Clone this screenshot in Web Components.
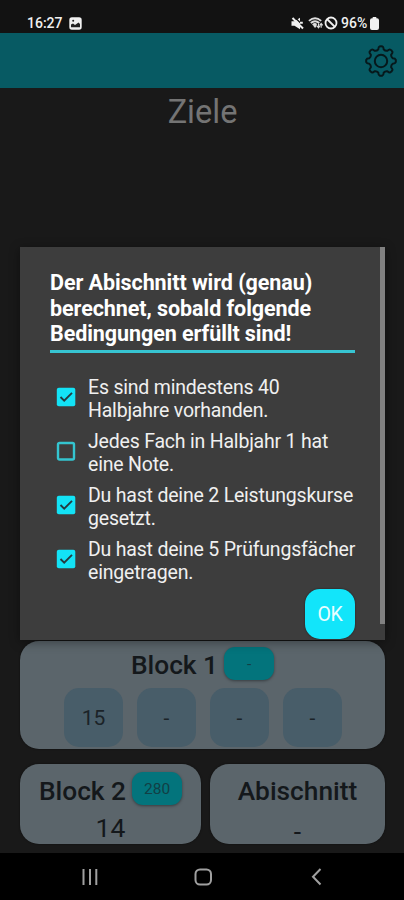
<!DOCTYPE html>
<html lang="de"><head><meta charset="utf-8"><title>Ziele</title>
<style>html,body{margin:0;height:900px;overflow:hidden;background:#191919}body{font-family:Roboto,"Liberation Sans",sans-serif}</style>
</head><body><goal-app></goal-app>
<script>
const define=(name,html)=>{
  const t=document.createElement('template');t.innerHTML=html;
  customElements.define(name,class extends HTMLElement{
    constructor(){super();this.attachShadow({mode:'open'}).append(t.content.cloneNode(true));}
  });
};

define('status-bar',`<style>
:host{display:flex;box-sizing:border-box;height:33px;background:#121212;color:#f0f0f0;padding:13px 25px 0 27px;align-items:flex-start;font-size:14px;line-height:20px;font-weight:500}
svg{display:block;flex:none}.time{width:36px;white-space:nowrap}.sp{flex:1}.pct{margin-left:3px;width:29px;white-space:nowrap;letter-spacing:0}
</style><span class="time">16:27</span>
<svg style="margin:4px 0 0 6px" width="13" height="13" viewBox="0 0 13 13"><rect x=".3" y=".3" width="12.4" height="12.4" rx="2.6" fill="#f0f0f0"/><path d="M2 10.2V7.6L4 6.5 6 8 9.5 5.5 11 7v3.2z" fill="#222"/><circle cx="4.2" cy="3.8" r="1" fill="#222"/></svg>
<span class="sp"></span>
<svg style="margin:4px 1px 0 0" width="13" height="13" viewBox="0 0 13 13"><path d="M.5 4.300h3L9 .8v11.400L3.500 8.700h-3z" fill="#f0f0f0"/><path d="M4.300.8 12.500 9" stroke="#121212" stroke-width="1.300"/><path d="M1.500 1 12 11.500M9 5.700h2.800" stroke="#f0f0f0" stroke-width="2"/></svg>
<svg style="margin:3px 0 0 3px" width="16" height="15" viewBox="0 0 17 15"><path d="M1 4.700Q7.500-1 14 4.700M3 7Q7.500 3 12 7M5 9.200Q7.500 7 9 9" fill="none" stroke="#ddd" stroke-width="2"/><path d="m7.500 8 2 2-2 2.300-2-2.300z" fill="#ddd"/><path d="M11.200 12V7.500M9.500 10l1.700 2 1.400-2M14 7.500V12m-1.500-2.500L14 7.500l1.600 2" fill="none" stroke="#ddd" stroke-width="1.200"/></svg>
<svg style="margin:3px 0 0" width="14" height="14" viewBox="0 0 14 14"><circle cx="7" cy="7" r="5.500" fill="none" stroke="#f0f0f0" stroke-width="1.800"/><path d="m3 3 8 8" stroke="#f0f0f0" stroke-width="1.800"/></svg>
<span class="pct">96%</span>
<svg style="margin:4px 0 0" width="9" height="13" viewBox="0 0 9 13"><path d="M2.700 0h3.600v1.200H7q2 0 2 2V11q0 2-2 2H2q-2 0-2-2V3.200q0-2 2-2h.7z" fill="#f0f0f0"/></svg>`);

define('app-header',`<style>:host{display:flex;height:55px;box-sizing:border-box;background:#075a63;justify-content:flex-end;padding:12px 7px 0 0}</style>
<svg width="32" height="32" viewBox="-16 -16 32 32" fill="none" stroke="#06181b" stroke-width="2" stroke-linejoin="round"><circle r="6.200"/><path id="g"/></svg>`);

define('nav-bar',`<style>:host{display:flex;height:47px;background:#000}svg{display:block}</style>
<svg width="404" height="47" fill="none" stroke="#a0a0a0" stroke-width="2"><path d="M83.500 16v16M90 16v16M96.300 16v16"/><rect x="195.500" y="16.500" width="15.500" height="15" rx="4.500"/><path d="m320.500 16-7.500 7.700 7.500 7.800"/></svg>`);

define('point-badge',`<style>:host{display:flex;box-sizing:border-box;width:50px;height:33px;border-radius:11px;background:#03747c;color:#123f45;font-size:15.500px;align-items:center;justify-content:center;box-shadow:0 1px 3px #0006}</style><slot></slot>`);
define('grade-tile',`<style>:host{display:flex;width:59px;height:59px;border-radius:15px;background:#485d69;color:#1b2328;font-size:21px;align-items:center;justify-content:center}</style><slot></slot>`);
define('result-card',`<style>:host{display:flex;flex-direction:column;box-sizing:border-box;border-radius:19px;background:#5b656b;box-shadow:0 0 2px #0009;color:#14181b}
.head{display:flex;justify-content:center;gap:6px;height:33px;margin-top:var(--head-top,6px)}.t{font-size:26.300px;line-height:37px;font-weight:500;white-space:nowrap;margin-top:var(--title-drop,0px)}
</style><div class="head"><span class="t"><slot name="title"></slot></span><slot name="badge"></slot></div><slot></slot>`);
define('check-box',`<style>:host{display:block;width:20px;height:20px}svg{display:block}.yes,:host([checked]) .no{display:none}:host([checked]) .yes{display:block}</style>
<svg width="20" height="20"><rect class="no" x="2" y="2" width="16" height="16.500" rx="1.500" fill="none" stroke="#34c5d0" stroke-width="2.400"/><g class="yes"><rect x=".8" y=".8" width="18.500" height="18.500" rx="2" fill="#13e3f6"/><path d="m4.500 10 3.700 3.600 7.800-7.800" fill="none" stroke="#253b40" stroke-width="1.900"/></g></svg>`);
define('condition-row',`<style>:host{display:flex;height:54px;align-items:flex-start}.box{padding:11px 12px 0 6px}.txt{font-size:19.500px;letter-spacing:-.2px;line-height:23px;color:#f0f0f0;white-space:nowrap}</style><div class="box"><slot name="box"></slot></div><div class="txt"><slot></slot></div>`);
define('ok-button',`<style>:host{display:flex;width:50px;height:50px;border-radius:15px;background:#12e5fa;color:#e9fdff;font-size:19.500px;letter-spacing:-.3px;align-items:center;justify-content:center;box-shadow:0 0 2px #0008}</style><slot></slot>`);
define('condition-dialog',`<style>
:host{position:absolute;left:20px;top:247px;width:365px;height:393px;box-sizing:border-box;background:#3d3d3d;padding:23px 30px 0;box-shadow:0 2px 10px #0006}
.title{font-size:21.500px;letter-spacing:-.07px;line-height:25.500px;font-weight:700;color:#fff;white-space:nowrap;height:80px;border-bottom:3px solid #37c5d2}
.list{margin-top:23px}.actions{display:flex;justify-content:flex-end;margin-top:-3px}
.bar{position:absolute;right:0;top:0;width:5px;height:377px;background:#818181}
</style><div class="title"><slot name="title"></slot></div><div class="list"><slot></slot></div><div class="actions"><slot name="action"></slot></div><div class="bar"></div>`);

define('goal-app',`<style>
:host{display:flex;flex-direction:column;position:relative;width:404px;height:900px;background:#191919}
h1{margin:0;height:553px;text-align:center;font-size:32.500px;line-height:49px;font-weight:400;color:#747474;text-indent:1px}
main{flex:1;padding:0 19px 0 20px}.b1{height:108px}.tiles{display:grid;grid-template-columns:repeat(4,59px);gap:14px;margin:8px 0 0 44px}
.pair{display:grid;grid-template-columns:181px 175px;justify-content:space-between;margin-top:15px}.pair result-card{height:80px;--head-top:8px;--title-drop:1px}
.n{text-align:center;font-size:26.500px;line-height:33px;padding-top:6px}.dash{padding-top:10px}
</style>
<status-bar></status-bar><app-header></app-header><h1>Ziele</h1>
<main><result-card class="b1"><span slot="title">Block 1</span><point-badge slot="badge">-</point-badge><div class="tiles"><grade-tile>15</grade-tile><grade-tile>-</grade-tile><grade-tile>-</grade-tile><grade-tile>-</grade-tile></div></result-card>
<div class="pair"><result-card><span slot="title">Block 2</span><point-badge slot="badge">280</point-badge><div class="n">14</div></result-card><result-card><span slot="title">Abischnitt</span><div class="n dash">-</div></result-card></div></main>
<nav-bar></nav-bar>
<condition-dialog><div slot="title">Der Abischnitt wird (genau)<br>berechnet, sobald folgende<br>Bedingungen erfüllt sind!</div>
<condition-row><check-box slot="box" checked></check-box>Es sind mindestens 40<br>Halbjahre vorhanden.</condition-row>
<condition-row><check-box slot="box"></check-box>Jedes Fach in Halbjahr 1 hat<br>eine Note.</condition-row>
<condition-row><check-box slot="box" checked></check-box>Du hast deine 2 Leistungskurse<br>gesetzt.</condition-row>
<condition-row><check-box slot="box" checked></check-box>Du hast deine 5 Prüfungsfächer<br>eingetragen.</condition-row>
<ok-button slot="action">OK</ok-button></condition-dialog>`);

// Eight-toothed gear outline for the settings icon
const gear=document.querySelector('goal-app').shadowRoot.querySelector('app-header').shadowRoot.getElementById('g');
let d='';
for(let i=0;i<8;i++){
  const p=(r,a)=>{const t=(i*45+a)*Math.PI/180;return (r*Math.sin(t)).toFixed(2)+' '+(-r*Math.cos(t)).toFixed(2);};
  d+=(i?'L':'M')+p(12,-13)+'Q'+p(14.5,-10)+' '+p(14.6,-6)+'Q'+p(15.2,0)+' '+p(14.6,6)+'Q'+p(14.5,10)+' '+p(12,13)+'Q'+p(10.7,22.5)+' '+p(12,32);
}
gear.setAttribute('d',d+'Z');
</script></body></html>
